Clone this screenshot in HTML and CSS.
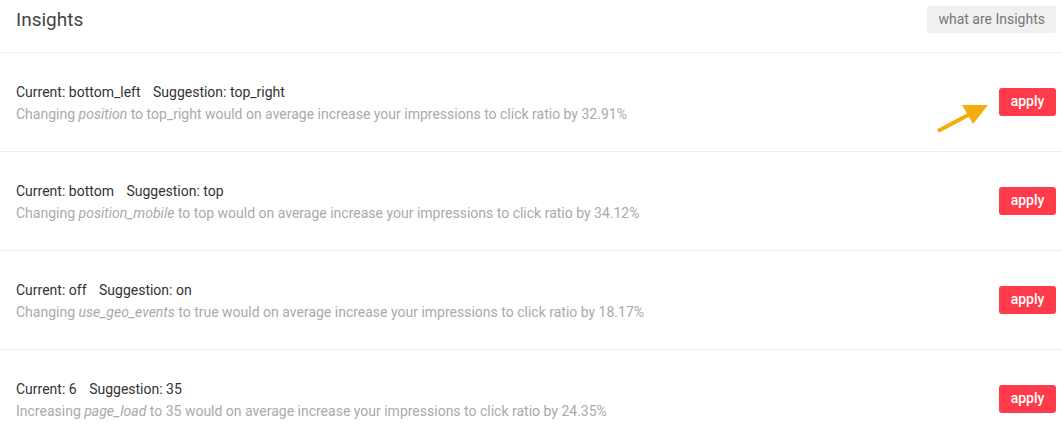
FILE: index.html
```html
<!DOCTYPE html>
<html lang="en">

<head>
    <meta charset="UTF-8">
    <meta name="viewport" content="width=device-width, initial-scale=1.0">
    <title>Insights</title>
    <link rel="stylesheet" href="styles.css">
</head>

<body>
    <div class="page">
        <div class="header">
            <div class="title">Insights</div>
            <div class="help">what are Insights</div>
        </div>

        <div class="row">
            <div class="info">
                <div class="current">Current: bottom_left <span class="sugg">Suggestion: top_right</span></div>
                <div class="desc">Changing <i>position</i> to top_right would on average increase your impressions to click ratio by 32.91%</div>
            </div>
            <div class="btn">apply</div>
            <svg class="arrow" width="60" height="34" viewBox="0 0 60 34">
                <line x1="2" y1="30" x2="36" y2="12" stroke="#f2ae0c" stroke-width="4" />
                <polygon points="26,4 52,4 37,23" fill="#f2ae0c" />
            </svg>
        </div>

        <div class="row">
            <div class="info">
                <div class="current">Current: bottom <span class="sugg">Suggestion: top</span></div>
                <div class="desc">Changing <i>position_mobile</i> to top would on average increase your impressions to click ratio by 34.12%</div>
            </div>
            <div class="btn">apply</div>
        </div>

        <div class="row">
            <div class="info">
                <div class="current">Current: off <span class="sugg">Suggestion: on</span></div>
                <div class="desc">Changing <i>use_geo_events</i> to true would on average increase your impressions to click ratio by 18.17%</div>
            </div>
            <div class="btn">apply</div>
        </div>

        <div class="row">
            <div class="info">
                <div class="current">Current: 6 <span class="sugg">Suggestion: 35</span></div>
                <div class="desc">Increasing <i>page_load</i> to 35 would on average increase your impressions to click ratio by 24.35%</div>
            </div>
            <div class="btn">apply</div>
        </div>
    </div>
</body>

</html>
```

FILE: styles.css
```css
body {
    margin: 0;
    background-color: #fff;
    font-family: Roboto, "Liberation Sans", sans-serif;
}

.page {
    padding: 0 6px 0 16px;
}

.header {
    height: 53px;
    display: flex;
    justify-content: space-between;
    align-items: flex-start;
    border-bottom: 1px solid #eee;
    margin-left: -16px;
    margin-right: -6px;
    padding: 6px 6px 0 16px;
    box-sizing: border-box;
}

.title {
    font-size: 19px;
    color: #444;
    line-height: 28px;
}

.help {
    background-color: #f0f0f0;
    color: #777;
    font-size: 14px;
    height: 27px;
    line-height: 27px;
    padding: 0 11px;
    border-radius: 3px;
}

.row {
    position: relative;
    height: 99px;
    box-sizing: border-box;
    display: flex;
    justify-content: space-between;
    align-items: center;
    border-bottom: 1px solid #eee;
    margin-left: -16px;
    margin-right: -6px;
    padding: 1px 6px 0 16px;
}

.row:last-child {
    border-bottom: none;
}

.info {
    font-size: 14px;
    line-height: 22px;
}

.current {
    color: #333;
}

.sugg {
    margin-left: 9px;
}

.desc {
    color: #aaa;
}

.btn {
    background-color: #ff3b4b;
    color: #fff;
    font-size: 14px;
    font-weight: 500;
    width: 57px;
    height: 28px;
    line-height: 27px;
    text-align: center;
    border-radius: 3px;
    margin-top: -2px;
    cursor: pointer;
}

.arrow {
    position: absolute;
    left: 936px;
    top: 48px;
}
```
